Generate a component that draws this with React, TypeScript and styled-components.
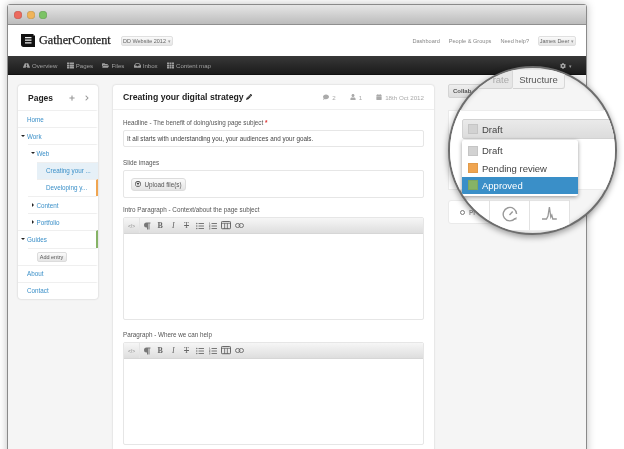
import styled, { createGlobalStyle } from 'styled-components';
import {
  FaRoad,
  FaThList,
  FaFolderOpen,
  FaInbox,
  FaTh,
  FaComment,
  FaUser,
  FaCalendar,
  FaPencilAlt,
  FaCog,
  FaRegArrowAltCircleUp,
  FaListUl,
  FaListOl,
  FaParagraph,
  FaPlus,
  FaChevronRight,
} from 'react-icons/fa';
import { ReactNode } from 'react';

const GlobalStyle = createGlobalStyle`
  html, body {
    margin: 0;
    background: #fff;
    font-family: "Liberation Sans", Arial, sans-serif;
  }
  * {
    box-sizing: border-box;
  }
`;

const navItems = [
  { label: 'Overview', icon: <FaRoad /> },
  { label: 'Pages', icon: <FaThList /> },
  { label: 'Files', icon: <FaFolderOpen /> },
  { label: 'Inbox', icon: <FaInbox /> },
  { label: 'Content map', icon: <FaTh /> },
];

type TreeRow = {
  label: string;
  depth: number;
  caret?: 'open' | 'closed';
  active?: boolean;
  flag?: string;
};

const tree: TreeRow[] = [
  { label: 'Home', depth: 0 },
  { label: 'Work', depth: 0, caret: 'open' },
  { label: 'Web', depth: 1, caret: 'open' },
  { label: 'Creating your ...', depth: 2, active: true },
  { label: 'Developing y...', depth: 2, flag: '#f0a550' },
  { label: 'Content', depth: 1, caret: 'closed' },
  { label: 'Portfolio', depth: 1, caret: 'closed' },
  { label: 'Guides', depth: 0, caret: 'open', flag: '#86b366' },
];

const TableIcon = () => (
  <svg width="11" height="9" viewBox="0 0 11 9" fill="none" stroke="#555" strokeWidth="1">
    <rect x="0.5" y="0.5" width="10" height="8" rx="1" />
    <path d="M0.5 2.5h10M4 2.5v6M7 2.5v6" strokeWidth="0.8" />
  </svg>
);

const LinkIcon = () => (
  <svg width="9" height="5" viewBox="0 0 9 5" fill="none" stroke="#666" strokeWidth="0.9">
    <rect x="0.5" y="0.5" width="4.4" height="4" rx="2" />
    <rect x="4.1" y="0.5" width="4.4" height="4" rx="2" />
  </svg>
);

const Toolbar = () => (
  <EditorBar>
    <SourceTool>&lt;/&gt;</SourceTool>
    <ToolGroup>
      <Tool><FaParagraph /></Tool>
      <Tool>B</Tool>
      <Tool $italic>I</Tool>
      <Tool $strike>T</Tool>
      <Tool><FaListUl /></Tool>
      <Tool><FaListOl /></Tool>
      <Tool><TableIcon /></Tool>
      <Tool><LinkIcon /></Tool>
    </ToolGroup>
  </EditorBar>
);

const Field = ({ label, after, children }: { label: ReactNode; after: number; children: ReactNode }) => (
  <FieldWrap $after={after}>
    <Label>{label}</Label>
    {children}
  </FieldWrap>
);

const Pulse = () => (
  <svg width="17" height="17" viewBox="0 0 17 17" fill="none" stroke="#999" strokeWidth="1.3">
    <path d="M1 14h4.5l1.5-3 1.4-9 1.4 10 1-2 1 4h4" />
  </svg>
);

const Gauge = () => (
  <svg width="16" height="16" viewBox="0 0 16 16" fill="none" stroke="#999" strokeWidth="1.4">
    <path d="M13 12.5A6.7 6.7 0 1 1 14.6 8" />
    <path d="M7.5 9l3.2-3.4" />
    <path d="M11 13.5h3.5v-2.4z" fill="#999" stroke="none" />
  </svg>
);

const App = () => (
  <>
    <GlobalStyle />
    <Page>
      <Window>
        <TitleBar>
          <Light $color="#ec6a5e" />
          <Light $color="#f0b45a" />
          <Light $color="#7cc366" />
        </TitleBar>

        <Header>
          <Logo>
            <svg width="14" height="13" viewBox="0 0 14 13">
              <path d="M0 0h12.5v1.5H14V13H2.5C1 13 0 12 0 10.5z" fill="#111" />
              <path d="M4 3h6.5v1.2H4zM4 5.6h6.5v1.2H4zM4 8.2h6.5v1.2H4z" fill="#eee" />
            </svg>
            <LogoText>GatherContent</LogoText>
          </Logo>
          <SmallButton $width={52}>DD Website 2012 <Arrow>▾</Arrow></SmallButton>
          <HeaderLinks>
            <span>Dashboard</span>
            <span>People &amp; Groups</span>
            <span>Need help?</span>
          </HeaderLinks>
          <SmallButton $width={38}>James Deer <Arrow>▾</Arrow></SmallButton>
        </Header>

        <Nav>
          {navItems.map(item => (
            <NavItem key={item.label}>
              {item.icon}
              {item.label}
            </NavItem>
          ))}
          <NavGear>
            <FaCog /> <Arrow>▾</Arrow>
          </NavGear>
        </Nav>

        <Body>
          <Sidebar>
            <SidebarHead>
              <SidebarTitle>Pages</SidebarTitle>
              <SidebarIcons>
                <FaPlus />
                <FaChevronRight />
              </SidebarIcons>
            </SidebarHead>
            {tree.map(row => (
              <Row key={row.label} $depth={row.depth} $active={row.active} $flag={row.flag}>
                <CaretSlot>{row.caret && <Caret $open={row.caret === 'open'} />}</CaretSlot>
                {row.label}
              </Row>
            ))}
            <Row $depth={1}>
              <CaretSlot />
              <AddButton>Add entry</AddButton>
            </Row>
            <Row $depth={0}>
              <CaretSlot />
              About
            </Row>
            <Row $depth={0}>
              <CaretSlot />
              Contact
            </Row>
          </Sidebar>

          <Main>
            <MainHead>
              <Title>
                Creating your digital strategy <FaPencilAlt />
              </Title>
              <Meta>
                <MetaItem><FaComment /> 2</MetaItem>
                <MetaItem><FaUser /> 1</MetaItem>
                <MetaItem><FaCalendar /> 18th Oct 2012</MetaItem>
              </Meta>
            </MainHead>
            <Form>
              <Field after={11} label={<>Headline - The benefit of doing/using page subject <Required>*</Required></>}>
                <TextBox>It all starts with understanding you, your audiences and your goals.</TextBox>
              </Field>
              <Field after={7} label="Slide images">
                <UploadBox>
                  <UploadButton><FaRegArrowAltCircleUp /> Upload file(s)</UploadButton>
                </UploadBox>
              </Field>
              <Field after={10} label="Intro Paragraph - Context/about the page subject">
                <Editor>
                  <Toolbar />
                </Editor>
              </Field>
              <Field after={0} label="Paragraph - Where we can help">
                <Editor>
                  <Toolbar />
                </Editor>
              </Field>
            </Form>
          </Main>

          <Aside>
            <CollabButton>Collab</CollabButton>
            <StatusPanel />
            <SideTabs>
              <SideDot />
              Pl
            </SideTabs>
          </Aside>
        </Body>
      </Window>

      <Lens>
        <LensTabs>
          <LensTab $width={40}>rate</LensTab>
          <LensTab $width={52} $on>Structure</LensTab>
        </LensTabs>
        <LensPanel>
          <StatusSelect>
            <Swatch $color="#d2d2d2" />
            Draft
          </StatusSelect>
          <Menu>
            <MenuItem>
              <Swatch $color="#d2d2d2" />
              Draft
            </MenuItem>
            <MenuItem>
              <Swatch $color="#f0a550" />
              Pending review
            </MenuItem>
            <MenuItem $selected>
              <Swatch $color="#86b366" />
              Approved
            </MenuItem>
          </Menu>
        </LensPanel>
        <LensStrip>
          <LensCell />
          <LensCell><Gauge /></LensCell>
          <LensCell><Pulse /></LensCell>
        </LensStrip>
      </Lens>
    </Page>
  </>
);

const Page = styled.div`
  position: relative;
  width: 624px;
  height: 449px;
  overflow: hidden;
  background: #fff;
  filter: blur(0.35px);
`;

const Window = styled.div`
  width: 580px;
  height: 460px;
  margin: 4px 0 0 7px;
  display: flex;
  flex-direction: column;
  background: #f5f5f5;
  border: 1px solid #8a8a8a;
  border-radius: 3px 3px 0 0;
  box-shadow: 0 0 8px rgba(0, 0, 0, 0.25);
`;

const TitleBar = styled.div`
  height: 20px;
  flex: none;
  display: flex;
  align-items: center;
  gap: 4.5px;
  padding-left: 6px;
  background: linear-gradient(#e6e6e6, #bcbcbc);
  border-bottom: 1px solid #8f8f8f;
`;

const Light = styled.i<{ $color: string }>`
  width: 8px;
  height: 8px;
  border-radius: 50%;
  background: ${p => p.$color};
  box-shadow: inset 0 0 1px rgba(0, 0, 0, 0.5);
`;

const Header = styled.div`
  height: 31px;
  flex: none;
  display: flex;
  align-items: center;
  padding: 0 10px 0 13px;
  background: #fff;
`;

const Logo = styled.div`
  display: flex;
  align-items: center;
  gap: 4px;
  width: 100px;
`;

const LogoText = styled.span`
  font-family: "Liberation Serif", serif;
  font-size: 12.2px;
  font-weight: 500;
  color: #222;
  -webkit-text-stroke: 0.25px #222;
`;

const SmallButton = styled.div<{ $width: number }>`
  width: ${p => p.$width}px;
  height: 10px;
  display: flex;
  align-items: center;
  justify-content: center;
  gap: 2px;
  white-space: nowrap;
  font-size: 5.5px;
  color: #666;
  background: linear-gradient(#fafafa, #e6e6e6);
  border: 1px solid #e0e0e0;
  border-radius: 2px;
`;

const Arrow = styled.span`
  font-size: 5px;
  color: #999;
`;

const HeaderLinks = styled.div`
  margin-left: auto;
  margin-right: 9px;
  display: flex;
  gap: 9px;
  font-size: 5.6px;
  color: #888;
`;

const Nav = styled.div`
  height: 19px;
  flex: none;
  display: flex;
  align-items: center;
  gap: 9.4px;
  padding: 0 14px 0 15px;
  background: linear-gradient(#383838, #1b1b1b);
  border-bottom: 1px solid #111;
`;

const NavItem = styled.div`
  display: flex;
  align-items: center;
  gap: 2px;
  font-size: 6.1px;
  color: #a0a0a0;

  & svg {
    width: 7px;
    height: 7px;
  }
`;

const NavGear = styled.div`
  margin-left: auto;
  display: flex;
  gap: 3px;
  align-items: center;
  color: #aaa;
  font-size: 6px;
  transform: translateY(1px);
`;

const Body = styled.div`
  flex: 1;
  min-height: 0;
  display: flex;
  align-items: flex-start;
  padding-left: 10px;
`;

const Sidebar = styled.div`
  width: 80px;
  flex: none;
  margin-top: 10px;
  background: #fff;
  border-radius: 3px;
  box-shadow: 0 0 2px rgba(0, 0, 0, 0.22);
  overflow: hidden;
  font-size: 6.3px;
  color: #3a8fc8;
`;

const SidebarHead = styled.div`
  height: 25px;
  display: flex;
  align-items: center;
  justify-content: space-between;
  padding: 0 8px 0 10px;
`;

const SidebarTitle = styled.div`
  font-size: 8.5px;
  font-weight: bold;
  color: #222;
`;

const SidebarIcons = styled.div`
  display: flex;
  gap: 9px;
  color: #999;

  & svg {
    width: 6px;
    height: 6px;
  }
`;

const Row = styled.div<{ $depth: number; $active?: boolean; $flag?: string }>`
  height: 17.2px;
  margin-left: ${p => p.$depth * 9.5}px;
  display: flex;
  align-items: center;
  border-top: 1px solid #efefef;
  border-right: 2px solid ${p => p.$flag || 'transparent'};
  background: ${p => (p.$active ? '#e6f0f7' : 'transparent')};
`;

const CaretSlot = styled.span`
  flex: none;
  width: 9px;
  display: flex;
  justify-content: center;
  padding-left: 1px;
`;

const Caret = styled.i<{ $open: boolean }>`
  width: 0;
  height: 0;
  border-style: solid;
  border-color: transparent;
  ${p =>
    p.$open
      ? 'border-width: 2.5px 2px 0 2px; border-top-color: #222;'
      : 'border-width: 2px 0 2px 2.5px; border-left-color: #222;'}
`;

const AddButton = styled.div`
  width: 30px;
  height: 10px;
  display: flex;
  align-items: center;
  justify-content: center;
  font-size: 5.5px;
  color: #555;
  background: linear-gradient(#fafafa, #e6e6e6);
  border: 1px solid #dcdcdc;
  border-radius: 2px;
`;

const Main = styled.div`
  width: 321px;
  margin-left: 15px;
  margin-top: 10px;
  flex: none;
  align-self: stretch;
  background: #fff;
  border-radius: 3px 3px 0 0;
  box-shadow: 0 0 2px rgba(0, 0, 0, 0.2);
`;

const MainHead = styled.div`
  height: 25px;
  display: flex;
  align-items: center;
  justify-content: space-between;
  padding: 0 10px;
  border-bottom: 1px solid #efefef;
`;

const Title = styled.div`
  font-size: 8.7px;
  font-weight: bold;
  color: #222;

  & svg {
    width: 6px;
    height: 6px;
  }
`;

const Meta = styled.div`
  display: flex;
  gap: 14px;
  font-size: 6.2px;
  color: #aaa;
`;

const MetaItem = styled.span`
  display: flex;
  align-items: center;
  gap: 3px;

  & svg {
    width: 6px;
    height: 6px;
  }
`;

const Form = styled.div`
  padding: 8px 10px 0;
  display: flex;
  flex-direction: column;
`;

const FieldWrap = styled.div<{ $after: number }>`
  display: flex;
  flex-direction: column;
  gap: 2px;
  margin-bottom: ${p => p.$after}px;
`;

const Label = styled.div`
  height: 10px;
  line-height: 10px;
  font-size: 6.3px;
  color: #555;
`;

const Required = styled.span`
  color: #d33;
  font-weight: bold;
`;

const TextBox = styled.div`
  height: 17px;
  display: flex;
  align-items: center;
  padding-left: 3px;
  font-size: 6.3px;
  color: #444;
  border: 1px solid #e6e6e6;
  border-radius: 2px;
`;

const UploadBox = styled.div`
  height: 28px;
  display: flex;
  align-items: center;
  padding-left: 7px;
  border: 1px solid #e6e6e6;
  border-radius: 2px;
`;

const UploadButton = styled.div`
  width: 55px;
  height: 13px;
  display: flex;
  align-items: center;
  justify-content: center;
  gap: 3px;
  font-size: 6.3px;
  color: #555;
  background: linear-gradient(#fafafa, #e4e4e4);
  border: 1px solid #dcdcdc;
  border-radius: 3px;

  & svg {
    width: 6px;
    height: 6px;
    color: #333;
  }
`;

const Editor = styled.div`
  height: 103px;
  border: 1px solid #e6e6e6;
  border-radius: 2px;
`;

const EditorBar = styled.div`
  height: 16px;
  display: flex;
  align-items: center;
  background: linear-gradient(#f6f6f6, #dedede);
  border-bottom: 1px solid #d6d6d6;
`;

const SourceTool = styled.div`
  width: 16px;
  height: 100%;
  display: flex;
  align-items: center;
  justify-content: center;
  font-size: 5px;
  color: #888;
  border-right: 1px solid #e4e4e4;
`;

const ToolGroup = styled.div`
  display: flex;
  align-items: center;
  gap: 3.2px;
  padding-left: 2px;
`;

const Tool = styled.div<{ $italic?: boolean; $strike?: boolean }>`
  width: 10px;
  display: flex;
  align-items: center;
  justify-content: center;
  font-family: "Liberation Serif", serif;
  font-size: 8px;
  font-weight: ${p => (p.$italic || p.$strike ? 'normal' : 'bold')};
  color: #666;
  font-style: ${p => (p.$italic ? 'italic' : 'normal')};
  text-decoration: ${p => (p.$strike ? 'line-through' : 'none')};

  & > svg {
    height: 6px;
    width: auto;
    color: #777;
  }

  & > svg[width] {
    height: auto;
  }
`;

const Aside = styled.div`
  flex: 1;
  padding: 9px 0 0 14px;
  display: flex;
  flex-direction: column;
  align-self: stretch;
`;

const CollabButton = styled.div`
  width: 60px;
  height: 14px;
  padding-left: 4px;
  line-height: 12px;
  font-size: 6px;
  font-weight: bold;
  color: #555;
  background: linear-gradient(#eee, #dedede);
  border: 1px solid #d4d4d4;
  border-radius: 2px;
`;

const StatusPanel = styled.div`
  height: 80px;
  margin-top: 12px;
  background: #fff;
  border: 1px solid #eaeaea;
`;

const SideTabs = styled.div`
  width: 122px;
  height: 24px;
  margin-top: 10px;
  display: flex;
  align-items: center;
  gap: 4px;
  padding-left: 11px;
  font-size: 6.5px;
  font-weight: bold;
  color: #999;
  background: #fff;
  border: 1px solid #eaeaea;
  border-radius: 3px;
`;

const SideDot = styled.i`
  width: 5px;
  height: 5px;
  border-radius: 50%;
  border: 1.5px solid #777;
`;

const Lens = styled.div`
  position: absolute;
  left: 448px;
  top: 66px;
  width: 169px;
  height: 169px;
  padding-top: 2px;
  border-radius: 50%;
  overflow: hidden;
  background: #f5f5f5;
  border: 2px solid #6d6d6d;
  box-shadow: 0 2px 6px rgba(0, 0, 0, 0.4), inset 0 0 5px rgba(0, 0, 0, 0.18);
`;

const LensTabs = styled.div`
  display: flex;
  height: 19px;
  padding-left: 23px;
`;

const LensTab = styled.div<{ $on?: boolean; $width: number }>`
  width: ${p => p.$width}px;
  display: flex;
  align-items: center;
  justify-content: ${p => (p.$on ? 'center' : 'flex-end')};
  padding: 1px ${p => (p.$on ? 0 : 3)}px 0 0;
  font-size: 9.5px;
  white-space: nowrap;
  color: ${p => (p.$on ? '#555' : '#aaa')};
  background: ${p => (p.$on ? '#f3f3f3' : '#e6e6e6')};
  border-bottom: 1px solid #d2d2d2;
  border-right: 1px solid #d8d8d8;
  border-radius: 0 0 3px 0;
`;

const LensPanel = styled.div`
  position: relative;
  height: 80px;
  margin-top: 21px;
  padding: 8px 0 0 12px;
  background: #fff;
  border-top: 1px solid #ececec;
  border-bottom: 1px solid #ececec;
`;

const StatusSelect = styled.div`
  height: 20px;
  display: flex;
  align-items: center;
  gap: 4px;
  padding-left: 5px;
  font-size: 9.5px;
  color: #444;
  background: linear-gradient(#eaeaea, #dcdcdc);
  border: 1px solid #d2d2d2;
  border-radius: 2px 0 0 2px;
`;

const Swatch = styled.i<{ $color: string }>`
  flex: none;
  width: 10px;
  height: 10px;
  background: ${p => p.$color};
  box-shadow: inset 0 0 0 1px rgba(0, 0, 0, 0.06);
`;

const Menu = styled.div`
  position: absolute;
  left: 12px;
  top: 29px;
  width: 116px;
  height: 56px;
  padding: 2px 0;
  background: #fff;
  border-radius: 2px;
  box-shadow: 0 1px 4px rgba(0, 0, 0, 0.4);
`;

const MenuItem = styled.div<{ $selected?: boolean }>`
  height: 17.4px;
  display: flex;
  align-items: center;
  gap: 4px;
  padding-left: 6px;
  font-size: 9.5px;
  color: ${p => (p.$selected ? '#fff' : '#444')};
  background: ${p => (p.$selected ? '#3a8fc8' : 'transparent')};
`;

const LensStrip = styled.div`
  display: flex;
  height: 30px;
  margin-top: 10px;
`;

const LensCell = styled.div`
  width: 40px;
  display: flex;
  align-items: center;
  justify-content: center;
  padding-bottom: 4px;
  background: #fff;
  border-right: 1px solid #e2e2e2;
  border-top: 1px solid #e8e8e8;
`;

export default App;
